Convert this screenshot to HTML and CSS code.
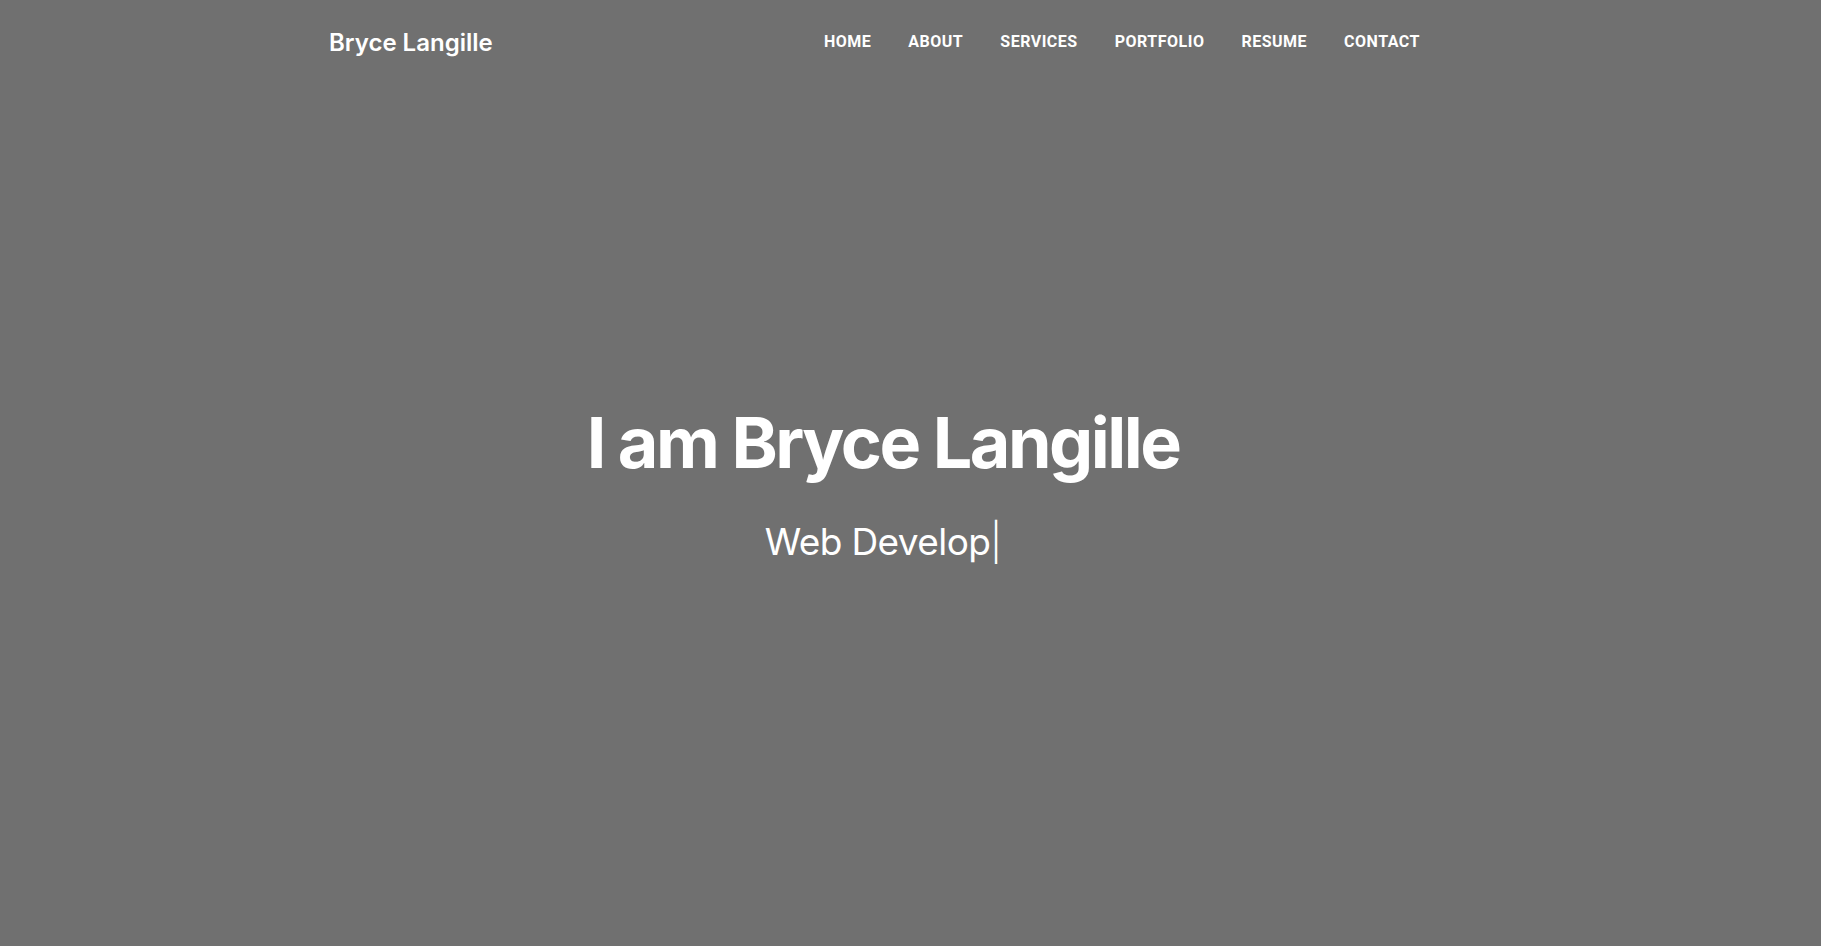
FILE: index.html
```html
<!DOCTYPE html>
<html lang="en">
<head>
<meta charset="utf-8">
<title>Bryce Langille</title>
<link rel="stylesheet" href="styles.css">
</head>
<body>
<div class="page">
  <header class="site-header">
    <a class="brand" href="#">Bryce Langille</a>
    <nav class="main-nav">
      <a href="#">HOME</a>
      <a href="#">ABOUT</a>
      <a href="#">SERVICES</a>
      <a href="#">PORTFOLIO</a>
      <a href="#">RESUME</a>
      <a href="#">CONTACT</a>
    </nav>
  </header>
  <section class="hero">
    <h1 class="hero-title">I am Bryce Langille</h1>
    <p class="hero-sub">Web Develop<span class="cursor">|</span></p>
  </section>
</div>
</body>
</html>
```

FILE: styles.css
```css
html, body {
  margin: 0;
  padding: 0;
  height: 100%;
}
body {
  background: #707070;
  color: #ffffff;
  font-family: Inter, "Noto Sans", sans-serif;
  overflow: hidden;
}
.page {
  height: 946px;
  display: flex;
  flex-direction: column;
}
.site-header {
  display: flex;
  justify-content: space-between;
  align-items: center;
  height: 84px;
  padding: 0 401px 0 329px;
}
.brand {
  color: #fff;
  text-decoration: none;
  font-family: Inter, sans-serif;
  font-weight: 600;
  font-size: 24px;
  letter-spacing: 0;
}
.main-nav {
  display: flex;
  gap: 37px;
  padding-bottom: 2px;
}
.main-nav a {
  color: #fff;
  text-decoration: none;
  font-family: Roboto, sans-serif;
  font-weight: 700;
  font-size: 16px;
  letter-spacing: 0.5px;
}
.hero {
  flex: 1;
  display: flex;
  flex-direction: column;
  align-items: center;
  justify-content: center;
  padding: 0 55px 64px 0;
  text-align: center;
}
.hero-title {
  margin: 0;
  font-family: Inter, sans-serif;
  font-weight: 700;
  font-size: 70px;
  letter-spacing: -2.5px;
  line-height: 1.2;
}
.hero-sub {
  margin: 35px 0 0;
  font-family: Inter, sans-serif;
  font-weight: 400;
  font-size: 37px;
  letter-spacing: -0.6px;
  line-height: 1.2;
}
.cursor {
  font-weight: 300;
}
```
